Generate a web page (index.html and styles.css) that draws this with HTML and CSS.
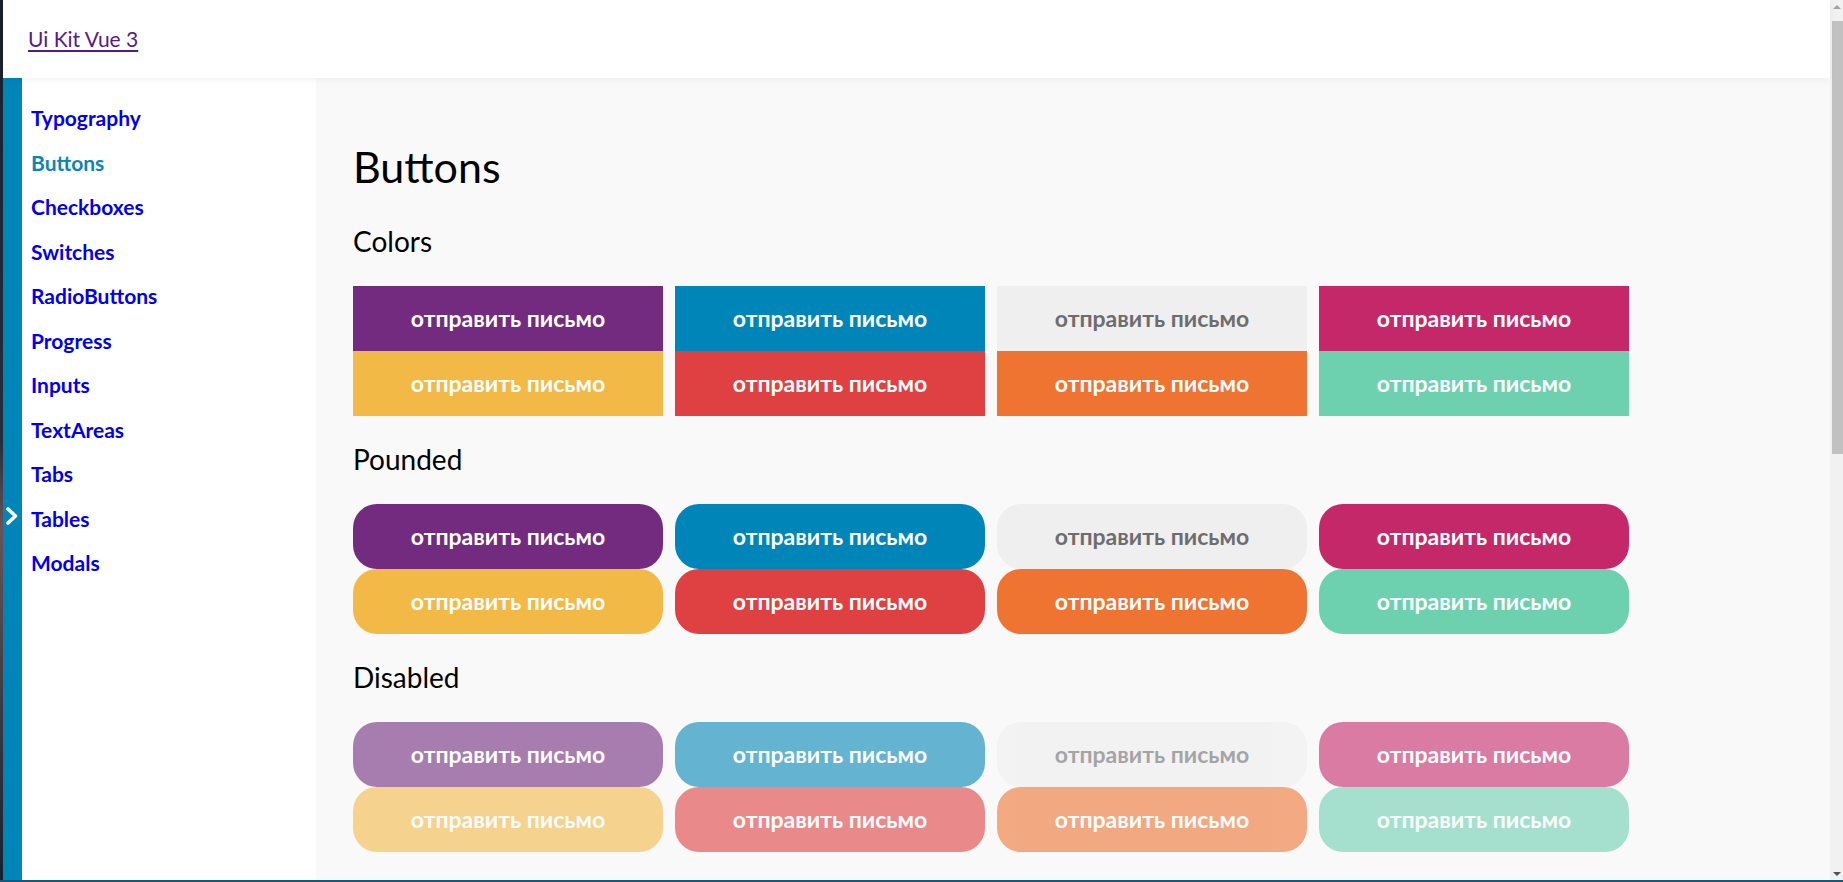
FILE: index.html
```html
<!DOCTYPE html>
<html lang="ru">
<head>
<meta charset="utf-8">
<title>Ui Kit Vue 3</title>
<link rel="stylesheet" href="styles.css">
</head>
<body>
<div class="frame">
  <div class="page">
    <div class="viewport">
      <header class="topbar">
        <a class="brand" href="#">Ui Kit Vue 3</a>
      </header>
      <div class="main">
        <aside class="sidebar">
          <div class="strip">
            <span class="toggle">
              <svg width="14" height="20" viewBox="0 0 14 20"><polyline points="3,3 10.5,10 3,17" fill="none" stroke="#fff" stroke-width="3.6" stroke-linecap="round" stroke-linejoin="round"/></svg>
            </span>
          </div>
          <nav class="nav">
            <a class="nav-link" href="#">Typography</a>
            <a class="nav-link active" href="#">Buttons</a>
            <a class="nav-link" href="#">Checkboxes</a>
            <a class="nav-link" href="#">Switches</a>
            <a class="nav-link" href="#">RadioButtons</a>
            <a class="nav-link" href="#">Progress</a>
            <a class="nav-link" href="#">Inputs</a>
            <a class="nav-link" href="#">TextAreas</a>
            <a class="nav-link" href="#">Tabs</a>
            <a class="nav-link" href="#">Tables</a>
            <a class="nav-link" href="#">Modals</a>
          </nav>
        </aside>
        <section class="content">
          <h1 class="title">Buttons</h1>

          <h2 class="subtitle">Colors</h2>
          <div class="grid">
            <button class="btn purple">отправить письмо</button>
            <button class="btn blue">отправить письмо</button>
            <button class="btn gray">отправить письмо</button>
            <button class="btn magenta">отправить письмо</button>
            <button class="btn yellow">отправить письмо</button>
            <button class="btn red">отправить письмо</button>
            <button class="btn orange">отправить письмо</button>
            <button class="btn teal">отправить письмо</button>
          </div>

          <h2 class="subtitle">Pounded</h2>
          <div class="grid">
            <button class="btn round purple">отправить письмо</button>
            <button class="btn round blue">отправить письмо</button>
            <button class="btn round gray">отправить письмо</button>
            <button class="btn round magenta">отправить письмо</button>
            <button class="btn round yellow">отправить письмо</button>
            <button class="btn round red">отправить письмо</button>
            <button class="btn round orange">отправить письмо</button>
            <button class="btn round teal">отправить письмо</button>
          </div>

          <h2 class="subtitle">Disabled</h2>
          <div class="grid">
            <button class="btn round disabled purple" disabled>отправить письмо</button>
            <button class="btn round disabled blue" disabled>отправить письмо</button>
            <button class="btn round disabled gray" disabled>отправить письмо</button>
            <button class="btn round disabled magenta" disabled>отправить письмо</button>
            <button class="btn round disabled yellow" disabled>отправить письмо</button>
            <button class="btn round disabled red" disabled>отправить письмо</button>
            <button class="btn round disabled orange" disabled>отправить письмо</button>
            <button class="btn round disabled teal" disabled>отправить письмо</button>
          </div>
        </section>
      </div>
    </div>
    <div class="scrollbar">
      <span class="arrow up"></span>
      <div class="track"><div class="thumb"></div></div>
      <span class="arrow down"></span>
    </div>
  </div>
</div>
</body>
</html>
```
FILE: styles.css
```css
* { box-sizing: border-box; }
html, body {
  margin: 0;
  height: 100%;
  overflow: hidden;
  background: #1a1f2d;
  font-family: "Lato", "Noto Sans", sans-serif;
}
.frame {
  height: 882px;
  padding-left: 3px;
  padding-bottom: 2px;
  background: linear-gradient(to bottom, #1a1f2d 0%, #2a2c3a 50%, #6a5257 60%, #1a1f2d 100%);
  display: flex;
  flex-direction: column;
  position: relative;
}
.frame::after {
  content: "";
  position: absolute;
  left: 0; right: 0; bottom: 0;
  height: 2px;
  background: #17577a;
}
.page {
  flex: 1;
  display: flex;
  min-height: 0;
}
.viewport {
  flex: 1;
  display: flex;
  flex-direction: column;
  min-width: 0;
  background: #f9f9f9;
}
.topbar {
  height: 78px;
  flex: none;
  background: #fff;
  display: flex;
  align-items: center;
  padding-left: 25px;
  position: relative;
  z-index: 2;
  box-shadow: 0 2px 8px rgba(0,0,0,0.05);
}
.brand {
  color: #551a8b;
  font-size: 21px;
  text-decoration: underline;
  text-underline-offset: 3px;
  margin-top: -1px;
}
.main {
  flex: 1;
  display: flex;
  min-height: 0;
}
.sidebar {
  width: 313px;
  flex: none;
  display: flex;
  background: #fff;
}
.strip {
  width: 19px;
  background: #0085b8;
  position: relative;
}
.toggle {
  position: absolute;
  left: 2px;
  top: 428px;
  display: block;
  line-height: 0;
}
.nav {
  flex: 1;
  display: flex;
  flex-direction: column;
  padding: 18px 0 0 9px;
}
.nav-link {
  display: block;
  line-height: 44.55px;
  font-size: 21px;
  font-weight: 700;
  color: #0000ee;
  text-decoration: none;
}
.nav-link.active { color: #0a86b6; }
.content {
  flex: 1;
  padding: 64px 0 0 37px;
}
.title {
  margin: 0;
  font-size: 43px;
  line-height: 50px;
  font-weight: 400;
  color: #000;
}
.subtitle {
  margin: 32px 0 28px;
  font-size: 28px;
  line-height: 34px;
  font-weight: 400;
  color: #000;
}
.grid + .subtitle { margin-top: 26px; }
.grid {
  display: grid;
  grid-template-columns: repeat(4, 310px);
  grid-auto-rows: 65px;
  column-gap: 12px;
}
.btn {
  border: 0;
  margin: 0;
  padding: 0 0 1px;
  font-family: inherit;
  font-size: 23px;
  font-weight: 700;
  color: #fff;
  cursor: pointer;
}
.round { border-radius: 24px; }
.purple { background: #722b7e; }
.blue { background: #0085b8; }
.gray { background: #efefef; color: #6d6d6d; }
.magenta { background: #c42869; }
.yellow { background: #f3b946; }
.red { background: #df4041; }
.orange { background: #ef7331; }
.teal { background: #6dd1b0; }
.disabled { opacity: 0.6; cursor: default; }
.scrollbar {
  width: 13px;
  flex: none;
  background: #f1f1f1;
  display: flex;
  flex-direction: column;
  align-items: stretch;
}
.track {
  flex: 1;
  padding: 8px 0 0 2px;
}
.thumb {
  height: 433px;
  background: #c1c1c1;
}
.arrow {
  height: 13px;
  flex: none;
  display: flex;
  align-items: center;
  justify-content: center;
}
.arrow::before {
  content: "";
  border-left: 4px solid transparent;
  border-right: 4px solid transparent;
}
.arrow.up::before { border-bottom: 4px solid #a3a3a3; }
.arrow.down::before { border-top: 4px solid #505050; }
```
